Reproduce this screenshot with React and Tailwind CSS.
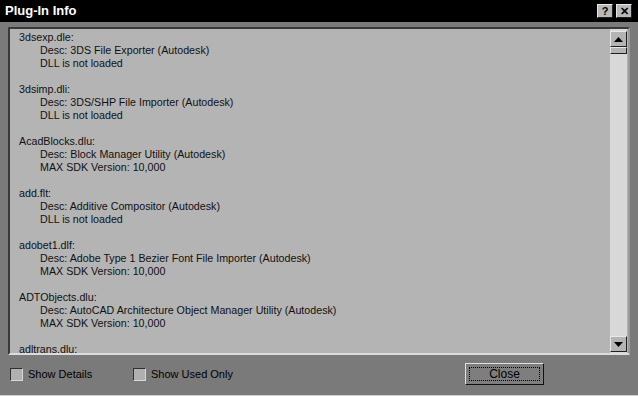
const entries = [
  ["3dsexp.dle:", "Desc: 3DS File Exporter (Autodesk)", "DLL is not loaded"],
  ["3dsimp.dli:", "Desc: 3DS/SHP File Importer (Autodesk)", "DLL is not loaded"],
  ["AcadBlocks.dlu:", "Desc: Block Manager Utility (Autodesk)", "MAX SDK Version: 10,000"],
  ["add.flt:", "Desc: Additive Compositor (Autodesk)", "DLL is not loaded"],
  ["adobet1.dlf:", "Desc: Adobe Type 1 Bezier Font File Importer (Autodesk)", "MAX SDK Version: 10,000"],
  ["ADTObjects.dlu:", "Desc: AutoCAD Architecture Object Manager Utility (Autodesk)", "MAX SDK Version: 10,000"],
  ["adltrans.dlu:"],
];

function TitleButton({ children }) {
  return (
    <div className="flex h-[14px] w-[16px] items-center justify-center border border-t-[#e8e8e8] border-l-[#e8e8e8] border-b-[#202020] border-r-[#202020] bg-[#b8b8b8] text-[11px] font-bold leading-none text-black">
      {children}
    </div>
  );
}

function Checkbox({ label }) {
  return (
    <div className="flex items-center gap-[5px]">
      <div className="h-[13px] w-[13px] border border-t-[#303030] border-l-[#303030] border-b-[#d8d8d8] border-r-[#d8d8d8] bg-[#b0b0b0]" />
      <span className="text-[11px] leading-[14px] text-black">{label}</span>
    </div>
  );
}

export default function App() {
  return (
    <div
      className="flex h-[396px] w-[638px] flex-col overflow-hidden bg-[#7a7a7a] border-b border-b-[#d0d0d0]"
      style={{ fontFamily: '"Liberation Sans", Arial, sans-serif' }}
    >
      <div className="flex h-[22px] shrink-0 items-center justify-between bg-black pl-[5px] pr-[6px]">
        <span className="text-[13px] font-bold text-white">Plug-In Info</span>
        <div className="flex gap-[3px]">
          <TitleButton>?</TitleButton>
          <TitleButton>✕</TitleButton>
        </div>
      </div>

      <div className="px-[8px] pt-[5px]">
        <div className="flex h-[328px] border-2 border-t-[#3a3a3a] border-l-[#3a3a3a] border-b-[#dcdcdc] border-r-[#9a9a9a] bg-[#b4b4b4]">
          <div className="flex-1 overflow-hidden pl-[9px] pt-[2px] text-[10.7px] leading-[13px] text-[#111]">
            {entries.map((e) => (
              <div key={e[0]} className="mb-[13px]">
                <div>{e[0]}</div>
                {e.slice(1).map((line) => (
                  <div key={line} className="pl-[21px]">{line}</div>
                ))}
              </div>
            ))}
          </div>
          <div className="mr-[1px] flex w-[17px] flex-col bg-[#d8d8d8] pt-[2px] pb-[1px]">
            <div className="flex h-[16px] items-center justify-center border border-t-[#e8e8e8] border-l-[#e8e8e8] border-b-[#202020] border-r-[#202020] bg-[#b4b4b4]">
              <svg width="9" height="5" viewBox="0 0 9 5"><path d="M4.5 0 L9 5 L0 5 Z" fill="#000" /></svg>
            </div>
            <div className="h-[7px] border border-t-[#e8e8e8] border-l-[#e8e8e8] border-b-[#202020] border-r-[#202020] bg-[#b4b4b4]" />
            <div className="flex-1" />
            <div className="flex h-[16px] items-center justify-center border border-t-[#e8e8e8] border-l-[#e8e8e8] border-b-[#202020] border-r-[#202020] bg-[#b4b4b4]">
              <svg width="9" height="5" viewBox="0 0 9 5"><path d="M0 0 L9 0 L4.5 5 Z" fill="#000" /></svg>
            </div>
          </div>
        </div>
      </div>

      <div className="flex flex-1 items-center pl-[10px] pr-[94px] pb-[2px]">
        <div className="w-[123px]">
          <Checkbox label="Show Details" />
        </div>
        <Checkbox label="Show Used Only" />
        <div className="flex-1" />
        <div className="flex h-[22px] w-[79px] items-center justify-center border border-t-[#e0e0e0] border-l-[#e0e0e0] border-b-[#101010] border-r-[#101010] bg-[#7e7e7e] p-[3px]">
          <div className="flex h-full w-full items-center justify-center border border-dotted border-black text-[12px] text-black">
            Close
          </div>
        </div>
      </div>
    </div>
  );
}
